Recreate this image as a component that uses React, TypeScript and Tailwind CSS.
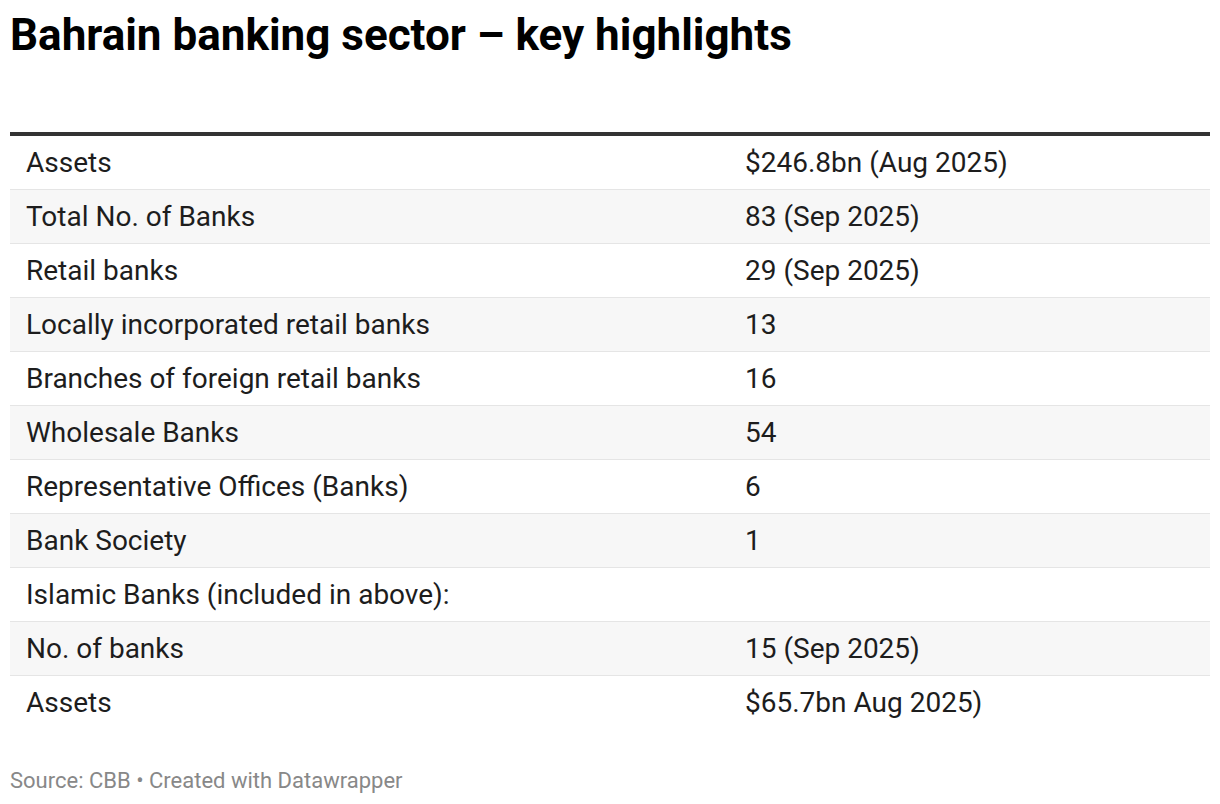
const rows = [
  ["Assets", "$246.8bn (Aug 2025)"],
  ["Total No. of Banks", "83 (Sep 2025)"],
  ["Retail banks", "29 (Sep 2025)"],
  ["Locally incorporated retail banks", "13"],
  ["Branches of foreign retail banks", "16"],
  ["Wholesale Banks", "54"],
  ["Representative Offices (Banks)", "6"],
  ["Bank Society", "1"],
  ["Islamic Banks (included in above):", ""],
  ["No. of banks", "15 (Sep 2025)"],
  ["Assets", "$65.7bn Aug 2025)"],
];

export default function App() {
  return (
    <div className="w-[1220px] h-[804px] bg-white px-[10px] text-[#1d1d1d] font-['Roboto',sans-serif]">
      <h1 className="pt-[8px] text-[44px] leading-[54px] font-bold text-black">
        Bahrain banking sector – key highlights
      </h1>

      <div className="mt-[70px] border-t-[4px] border-[#333333]">
        {rows.map(([label, value], i) => (
          <div
            key={i}
            className={`flex h-[54px] items-center text-[28px] ${i % 2 === 1 ? "bg-[#f7f7f7]" : "bg-white"} ${i < rows.length - 1 ? "border-b border-[#e5e5e5]" : ""}`}
          >
            <div className="w-[735px] pl-[16px]">{label}</div>
            <div className="flex-1">{value}</div>
          </div>
        ))}
      </div>

      <p className="mt-[34px] text-[22px] text-[#888888]">Source: CBB • Created with Datawrapper</p>
    </div>
  );
}
